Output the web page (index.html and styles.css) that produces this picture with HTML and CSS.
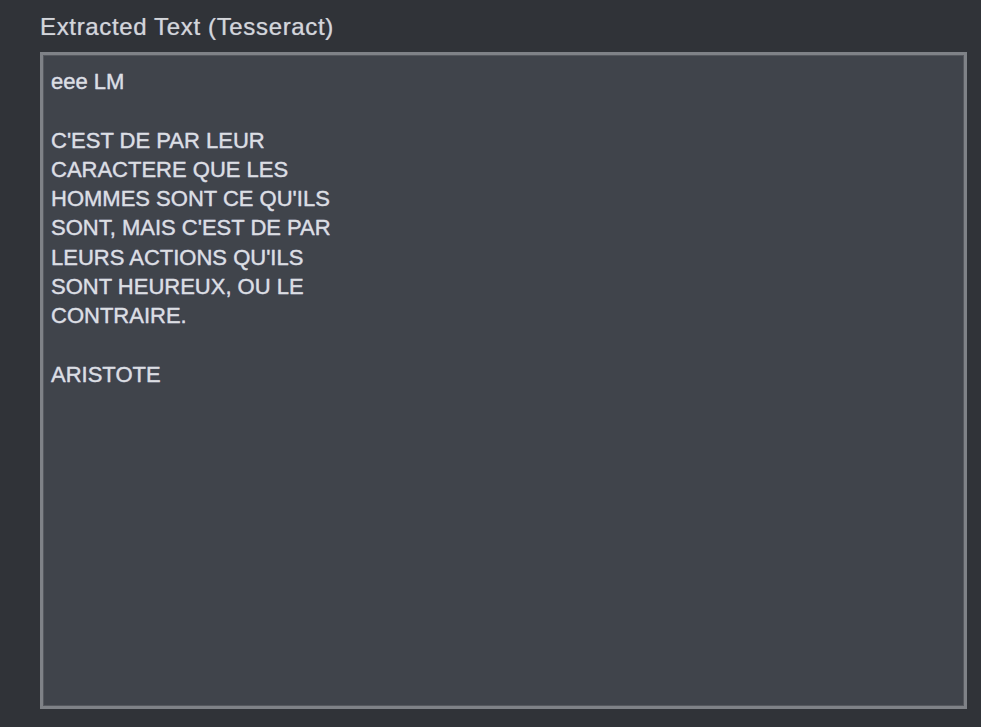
FILE: index.html
```html
<!DOCTYPE html>
<html>
<head>
<meta charset="utf-8">
<link rel="stylesheet" href="styles.css">
</head>
<body>
<div class="panel">
  <div class="label">Extracted Text (Tesseract)</div>
  <div class="textbox">
    <div class="line">eee LM</div>
    <div class="line">&nbsp;</div>
    <div class="line">C'EST DE PAR LEUR</div>
    <div class="line">CARACTERE QUE LES</div>
    <div class="line">HOMMES SONT CE QU'ILS</div>
    <div class="line">SONT, MAIS C'EST DE PAR</div>
    <div class="line">LEURS ACTIONS QU'ILS</div>
    <div class="line">SONT HEUREUX, OU LE</div>
    <div class="line">CONTRAIRE.</div>
    <div class="line">&nbsp;</div>
    <div class="line">ARISTOTE</div>
  </div>
</div>
</body>
</html>
```
FILE: styles.css
```css
html, body {
  margin: 0;
  padding: 0;
  width: 981px;
  height: 727px;
  overflow: hidden;
  background: #303338;
}
.panel {
  padding: 12px 14px 0 40px;
  display: flex;
  flex-direction: column;
}
.label {
  font-family: "Liberation Sans", Arial, sans-serif;
  font-size: 24px;
  line-height: 30px;
  color: #d4d6da;
  letter-spacing: 0.65px;
  height: 40px;
  -webkit-text-stroke: 0.2px #d4d6da;
  text-shadow: 0 0 1px rgba(180,200,255,0.4);
}
.textbox {
  box-sizing: border-box;
  width: 927px;
  height: 657px;
  border: 3px solid #7f8287;
  box-shadow: inset 0 0 0 1px #55585e;
  background: #40444b;
  padding: 12px 8px;
  font-family: "Liberation Sans", Arial, sans-serif;
  font-size: 22px;
  line-height: 29.3px;
  letter-spacing: 0;
  color: #dcdee2;
  -webkit-text-stroke: 0.3px #dcdee2;
  text-shadow: 0 0 1px rgba(180,200,255,0.5);
}
.line {
  white-space: pre;
}
```
